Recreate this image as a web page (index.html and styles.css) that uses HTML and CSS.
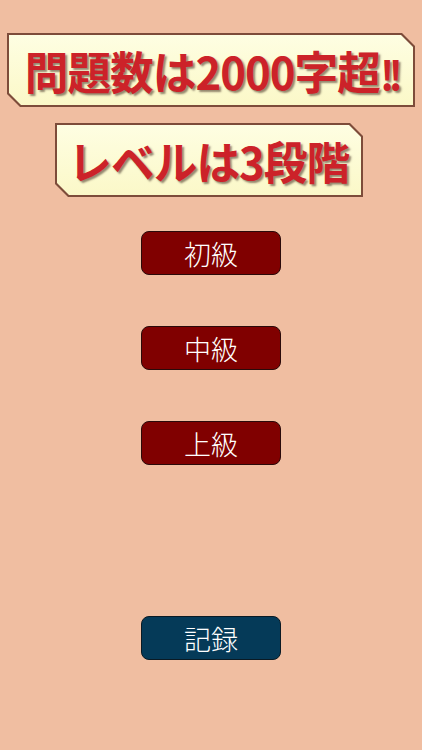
FILE: index.html
```html
<!DOCTYPE html>
<html lang="ja">
<head>
<meta charset="utf-8">
<link rel="stylesheet" href="styles.css">
</head>
<body>
<main class="screen">
  <div class="banner banner-wide">
    <div class="banner-inner"><span class="banner-text">問題数は2000字超<span class="bang">!!</span></span></div>
  </div>
  <div class="banner banner-narrow">
    <div class="banner-inner"><span class="banner-text">レベルは3段階</span></div>
  </div>
  <nav class="levels">
    <button class="btn btn-level">初級</button>
    <button class="btn btn-level">中級</button>
    <button class="btn btn-level">上級</button>
  </nav>
  <button class="btn btn-record">記録</button>
</main>
</body>
</html>
```
FILE: styles.css
```css
html, body {
  margin: 0;
  padding: 0;
}
body {
  background: #f0bea1;
  width: 422px;
  height: 750px;
  overflow: hidden;
  font-family: "Noto Sans CJK JP", sans-serif;
}
.screen {
  display: flex;
  flex-direction: column;
  align-items: center;
}
.banner {
  box-sizing: border-box;
  height: 74px;
  padding: 2px;
  background: #7d4c3a;
  clip-path: polygon(0 0, calc(100% - 13px) 0, 100% 13px, 100% 100%, 13px 100%, 0 calc(100% - 13px));
}
.banner-wide {
  width: 408px;
  margin-top: 33px;
}
.banner-narrow {
  width: 308px;
  margin-top: 16px;
  margin-right: 4px;
}
.banner-inner {
  height: 100%;
  display: flex;
  align-items: center;
  justify-content: center;
  background: linear-gradient(#fefee2, #fbf8c8);
  clip-path: polygon(0 0, calc(100% - 12px) 0, 100% 12px, 100% 100%, 12px 100%, 0 calc(100% - 12px));
}
.banner-text {
  display: inline-block;
  font-family: "Noto Sans CJK JP", sans-serif;
  font-size: 45px;
  font-weight: 700;
  color: #cc2229;
  letter-spacing: -1px;
  line-height: 1;
  white-space: nowrap;
  transform: scaleX(0.97);
  text-shadow: 2px 2px 2px rgba(60,40,30,0.55);
}
.bang {
  letter-spacing: -6px;
  font-size: 40px;
}
.levels {
  display: flex;
  flex-direction: column;
  gap: 51px;
  margin-top: 34px;
}
.btn {
  box-sizing: border-box;
  width: 140px;
  height: 44px;
  border-radius: 8px;
  border: 1px solid #2a0a0a;
  color: #ffffff;
  font-family: "Noto Sans CJK JP", sans-serif;
  font-size: 27px;
  font-weight: 300;
  line-height: 1;
  padding: 0;
  display: flex;
  align-items: center;
  justify-content: center;
}
.btn-level {
  background: #800000;
}
.btn-record {
  margin-top: 151px;
  background: #053a58;
  border-color: #0a1a24;
}
```
